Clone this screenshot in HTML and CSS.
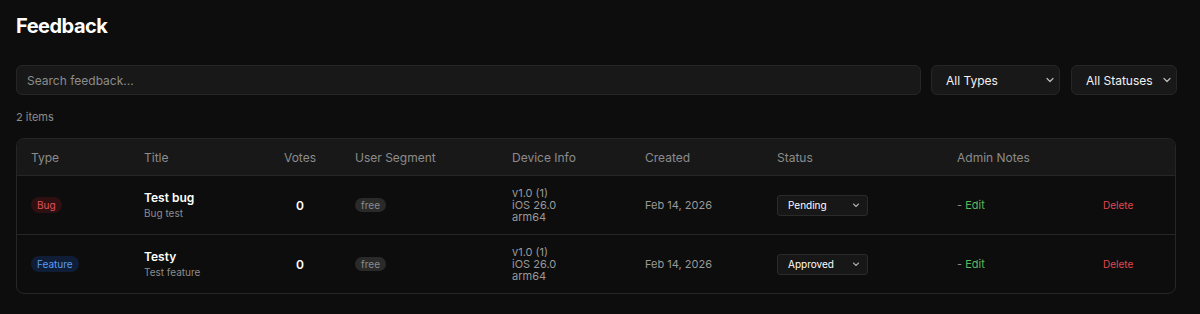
FILE: index.html
```html
<!DOCTYPE html>
<html lang="en">
<head>
    <meta charset="UTF-8">
    <meta name="viewport" content="width=device-width, initial-scale=1.0">
    <link rel="stylesheet" href="styles.css">
</head>
<body>
    <div class="page">
        <h1 class="page-title">Feedback</h1>
        <div class="filters">
            <input type="text" class="search" placeholder="Search feedback...">
            <div class="select types">
                <span>All Types</span>
                <svg width="10" height="10" viewBox="0 0 10 10"><path d="M2 3.5 5 6.5 8 3.5" fill="none" stroke="#bbb" stroke-width="1.2" stroke-linecap="round" stroke-linejoin="round"/></svg>
            </div>
            <div class="select statuses">
                <span>All Statuses</span>
                <svg width="10" height="10" viewBox="0 0 10 10"><path d="M2 3.5 5 6.5 8 3.5" fill="none" stroke="#bbb" stroke-width="1.2" stroke-linecap="round" stroke-linejoin="round"/></svg>
            </div>
        </div>
        <div class="count">2 items</div>
        <div class="table-box">
            <table class="feedback-table">
                <colgroup>
                    <col style="width:113px">
                    <col style="width:129px">
                    <col style="width:82px">
                    <col style="width:157px">
                    <col style="width:133px">
                    <col style="width:132px">
                    <col style="width:180px">
                    <col style="width:146px">
                    <col style="width:88px">
                </colgroup>
                <thead>
                    <tr>
                        <th>Type</th>
                        <th>Title</th>
                        <th class="center">Votes</th>
                        <th>User Segment</th>
                        <th>Device Info</th>
                        <th>Created</th>
                        <th>Status</th>
                        <th>Admin Notes</th>
                        <th></th>
                    </tr>
                </thead>
                <tbody>
                    <tr>
                        <td><span class="badge bug">Bug</span></td>
                        <td>
                            <div class="item-title">Test bug</div>
                            <div class="item-desc">Bug test</div>
                        </td>
                        <td class="center votes">0</td>
                        <td><span class="segment">free</span></td>
                        <td class="device">v1.0 (1)<br>iOS 26.0<br>arm64</td>
                        <td class="date">Feb 14, 2026</td>
                        <td>
                            <div class="status-select">
                                <span>Pending</span>
                                <svg width="10" height="10" viewBox="0 0 10 10"><path d="M2.5 4 5 6.5 7.5 4" fill="none" stroke="#aaa" stroke-width="1.1" stroke-linecap="round" stroke-linejoin="round"/></svg>
                            </div>
                        </td>
                        <td class="notes"><span class="dash">-</span> <a href="#" class="edit">Edit</a></td>
                        <td><a href="#" class="delete">Delete</a></td>
                    </tr>
                    <tr>
                        <td><span class="badge feature">Feature</span></td>
                        <td>
                            <div class="item-title">Testy</div>
                            <div class="item-desc">Test feature</div>
                        </td>
                        <td class="center votes">0</td>
                        <td><span class="segment">free</span></td>
                        <td class="device">v1.0 (1)<br>iOS 26.0<br>arm64</td>
                        <td class="date">Feb 14, 2026</td>
                        <td>
                            <div class="status-select">
                                <span>Approved</span>
                                <svg width="10" height="10" viewBox="0 0 10 10"><path d="M2.5 4 5 6.5 7.5 4" fill="none" stroke="#aaa" stroke-width="1.1" stroke-linecap="round" stroke-linejoin="round"/></svg>
                            </div>
                        </td>
                        <td class="notes"><span class="dash">-</span> <a href="#" class="edit">Edit</a></td>
                        <td><a href="#" class="delete">Delete</a></td>
                    </tr>
                </tbody>
            </table>
        </div>
    </div>
</body>
</html>
```

FILE: styles.css
```css
html, body {
    margin: 0;
    background: #0d0d0d;
    color: #fff;
    font-family: Inter, "Liberation Sans", sans-serif;
}
.page {
    padding: 14px 16px 16px 16px;
    width: 1161px;
}
.page-title {
    margin: 0;
    font-size: 20px;
    line-height: 24px;
    font-weight: 700;
    letter-spacing: -0.5px;
}
.filters {
    display: flex;
    margin-top: 27px;
    height: 30px;
}
.search {
    width: 905px;
    box-sizing: border-box;
    height: 30px;
    background: #181818;
    border: 1px solid #262626;
    border-radius: 6px;
    padding: 0 10px;
    color: #fff;
    font-family: inherit;
    font-size: 12px;
    outline: none;
}
.search::placeholder {
    color: #8c8c8c;
}
.select {
    box-sizing: border-box;
    height: 30px;
    background: #181818;
    border: 1px solid #262626;
    border-radius: 6px;
    display: flex;
    align-items: center;
    justify-content: space-between;
    padding: 0 4px 0 14px;
    font-size: 12px;
    color: #f2f2f2;
}
.types {
    width: 129px;
    margin-left: 10px;
}
.statuses {
    width: 106px;
    margin-left: 11px;
}
.count {
    margin-top: 14px;
    font-size: 11px;
    line-height: 16px;
    color: #8c8c8c;
}
.table-box {
    margin-top: 13px;
    width: 1160px;
    border: 1px solid #262626;
    border-radius: 8px;
    overflow: hidden;
    box-sizing: border-box;
}
.feedback-table {
    width: 100%;
    border-collapse: collapse;
    table-layout: fixed;
}
.feedback-table th {
    background: #181818;
    height: 36px;
    padding: 0 0 0 14px;
    text-align: left;
    font-weight: 400;
    font-size: 12px;
    color: #8c8c8c;
    border-bottom: 1px solid #262626;
}
.feedback-table td {
    height: 58px;
    padding: 0 0 0 14px;
    font-size: 11px;
    color: #999;
    vertical-align: middle;
}
.feedback-table tbody tr + tr td {
    border-top: 1px solid #262626;
}
.feedback-table .center {
    text-align: center;
    padding: 0;
}
.badge {
    display: inline-block;
    padding: 2px 6px;
    border-radius: 9px;
    font-size: 10px;
    line-height: 12px;
}
.bug {
    background: #2e1013;
    color: #e0525a;
}
.feature {
    background: #0f1d36;
    color: #5a9bf0;
}
.item-title {
    color: #fff;
    font-size: 12px;
    font-weight: 600;
    line-height: 15px;
}
.item-desc {
    color: #8c8c8c;
    font-size: 10px;
    line-height: 14px;
    margin-top: 1px;
}
.feedback-table .votes {
    color: #fff;
    font-size: 12px;
    font-weight: 600;
}
.segment {
    display: inline-block;
    background: #2a2a2a;
    color: #8c8c8c;
    font-size: 10px;
    line-height: 12px;
    padding: 1px 6px;
    border-radius: 8px;
}
.feedback-table .device {
    line-height: 12px;
    font-size: 11px;
}
.feedback-table .date {
    font-size: 11px;
}
.status-select {
    box-sizing: border-box;
    width: 91px;
    height: 21px;
    background: #171717;
    border: 1px solid #2a2a2a;
    border-radius: 3px;
    display: flex;
    align-items: center;
    justify-content: space-between;
    padding: 0 6px 0 10px;
    color: #fff;
    font-size: 10px;
}
.notes .dash {
    color: #8c8c8c;
}
.edit {
    color: #5cb85c;
    text-decoration: none;
}
.delete {
    color: #e0474f;
    text-decoration: none;
    font-size: 10px;
}
```
